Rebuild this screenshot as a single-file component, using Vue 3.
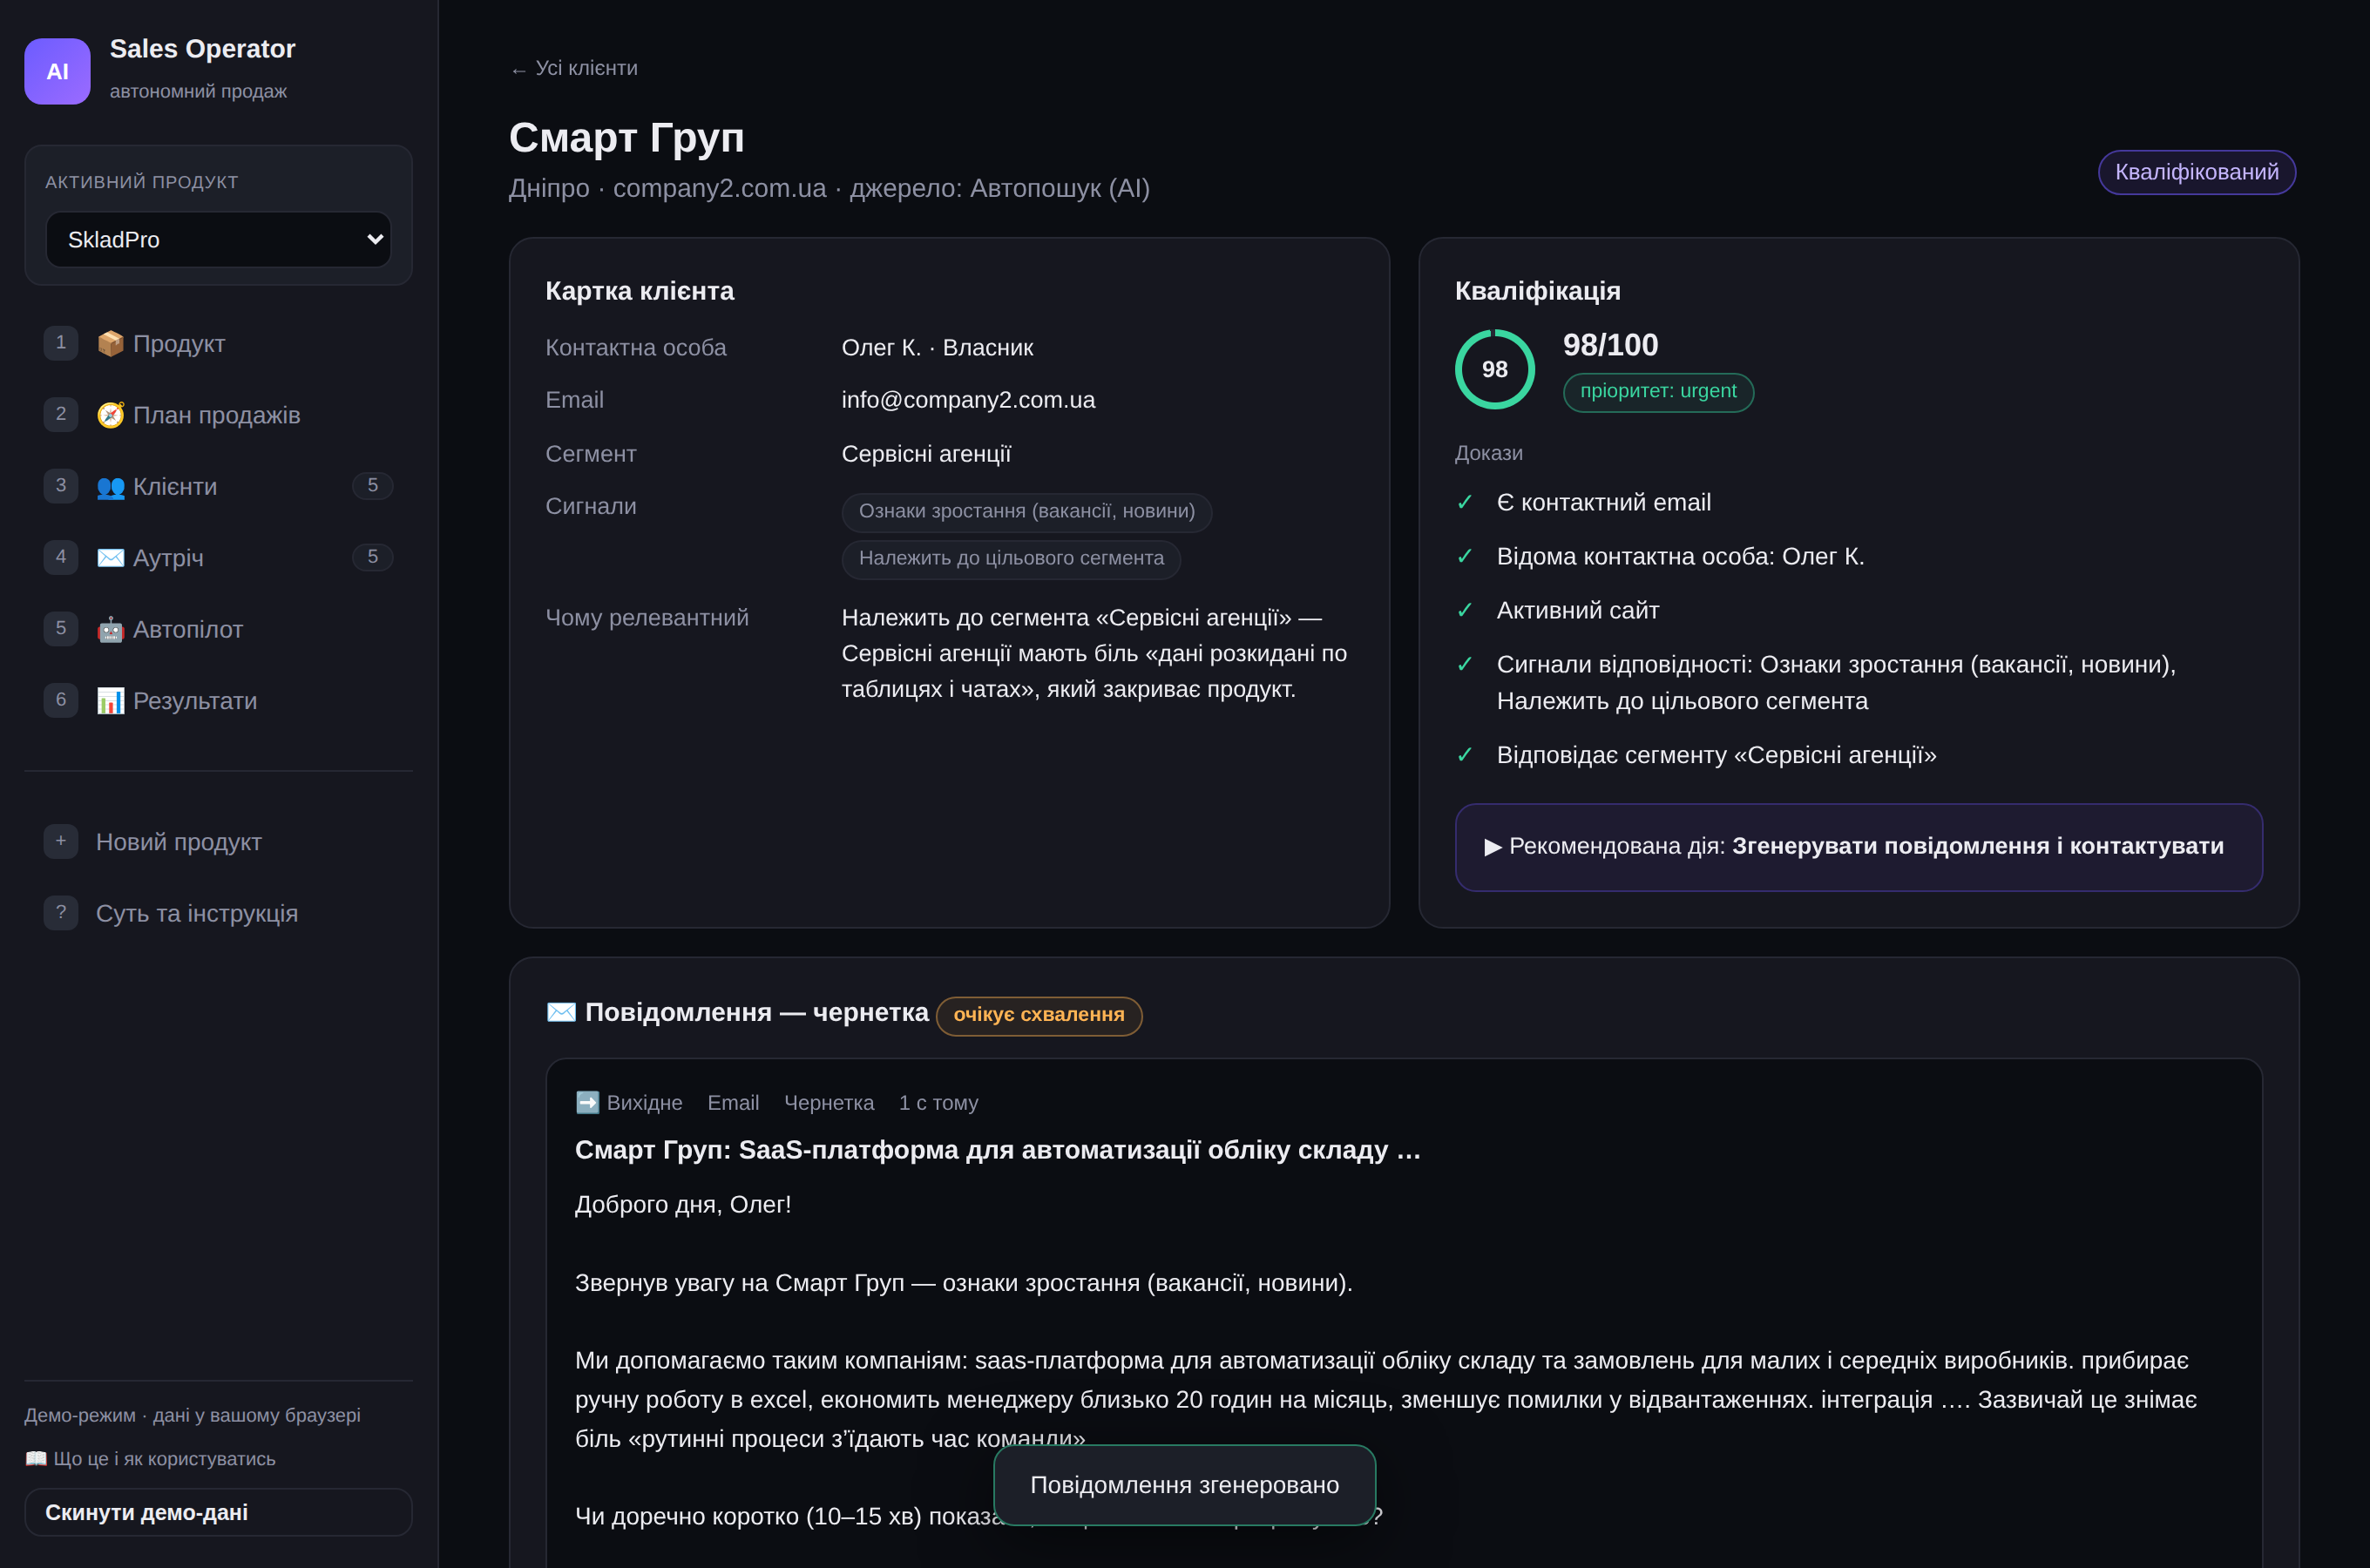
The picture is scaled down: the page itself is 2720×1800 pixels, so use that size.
<script setup>
const nav = [
  { n: '1', label: '📦 Продукт' },
  { n: '2', label: '🧭 План продажів' },
  { n: '3', label: '👥 Клієнти', count: 5 },
  { n: '4', label: '✉️ Аутріч', count: 5 },
  { n: '5', label: '🤖 Автопілот' },
  { n: '6', label: '📊 Результати' },
]
const extra = [
  { n: '+', label: 'Новий продукт' },
  { n: '?', label: 'Суть та інструкція' },
]
const signals = ['Ознаки зростання (вакансії, новини)', 'Належить до цільового сегмента']
const evidence = [
  'Є контактний email',
  'Відома контактна особа: Олег К.',
  'Активний сайт',
  'Сигнали відповідності: Ознаки зростання (вакансії, новини), Належить до цільового сегмента',
  'Відповідає сегменту «Сервісні агенції»',
]
const score = 98
const body = `Доброго дня, Олег!

Звернув увагу на Смарт Груп — ознаки зростання (вакансії, новини).

Ми допомагаємо таким компаніям: saas-платформа для автоматизації обліку складу та замовлень для малих і середніх виробників. прибирає ручну роботу в excel, економить менеджеру близько 20 годин на місяць, зменшує помилки у відвантаженнях. інтеграція …. Зазвичай це знімає біль «рутинні процеси з’їдають час команди».

Чи доречно коротко (10–15 хв) показати, як це системно працює у вас?`
</script>

<template>
  <div class="app">
    <aside class="sidebar">
      <div class="brand">
        <div class="logo">AI</div>
        <div class="brand-text">
          <div class="brand-name">Sales Operator</div>
          <div class="brand-sub">автономний продаж</div>
        </div>
      </div>

      <div class="product">
        <div class="product-label">АКТИВНИЙ ПРОДУКТ</div>
        <div class="select">
          <span>SkladPro</span>
          <svg width="20" height="14" viewBox="0 0 20 14"><path d="M2 2.2 L10 10 L18 2.2" fill="none" stroke="#ececf1" stroke-width="4.4" /></svg>
        </div>
      </div>

      <nav class="nav">
        <a v-for="i in nav" :key="i.n" class="nav-item">
          <span class="tile">{{ i.n }}</span>
          <span class="nav-label">{{ i.label }}</span>
          <span v-if="i.count" class="count">{{ i.count }}</span>
        </a>
        <div class="divider"></div>
        <a v-for="i in extra" :key="i.n" class="nav-item">
          <span class="tile">{{ i.n }}</span>
          <span class="nav-label">{{ i.label }}</span>
        </a>
      </nav>

      <div class="foot">
        <div class="foot-line">Демо-режим · дані у вашому браузері</div>
        <div class="foot-line foot-link">📖 Що це і як користуватись</div>
        <button class="reset">Скинути демо-дані</button>
      </div>
    </aside>

    <main class="main">
      <a class="back">← Усі клієнти</a>
      <header class="head">
        <div>
          <h1>Смарт Груп</h1>
          <p class="lead">Дніпро · company2.com.ua · джерело: Автопошук (AI)</p>
        </div>
        <span class="status">Кваліфікований</span>
      </header>

      <div class="cols">
        <section class="card">
          <h3>Картка клієнта</h3>
          <div class="kv">
            <span class="k">Контактна особа</span><span>Олег К. · Власник</span>
            <span class="k">Email</span><span>info@company2.com.ua</span>
            <span class="k">Сегмент</span><span>Сервісні агенції</span>
            <span class="k">Сигнали</span>
            <div class="chips">
              <span v-for="s in signals" :key="s" class="chip">{{ s }}</span>
            </div>
            <span class="k">Чому релевантний</span>
            <span>Належить до сегмента «Сервісні агенції» — Сервісні агенції мають біль «дані розкидані по таблицях і чатах», який закриває продукт.</span>
          </div>
        </section>

        <section class="card">
          <h3>Кваліфікація</h3>
          <div class="score">
            <div class="ring" :style="{ '--p': score + '%' }"><b>{{ score }}</b></div>
            <div class="score-text">
              <div class="score-num">{{ score }}/100</div>
              <span class="chip green">пріоритет: urgent</span>
            </div>
          </div>
          <div class="proof">Докази</div>
          <ul class="checks">
            <li v-for="e in evidence" :key="e"><span class="tick">✓</span><span>{{ e }}</span></li>
          </ul>
          <div class="reco">▶ Рекомендована дія: <b>Згенерувати повідомлення і контактувати</b></div>
        </section>
      </div>

      <section class="card wide">
        <div class="msg-head">
          <h3>✉️ Повідомлення — чернетка</h3>
          <span class="chip amber">очікує схвалення</span>
        </div>
        <article class="msg">
          <div class="meta"><span>➡️ Вихідне</span><span>Email</span><span>Чернетка</span><span>1 с тому</span></div>
          <div class="subject">Смарт Груп: SaaS-платформа для автоматизації обліку складу …</div>
          <div class="body">{{ body }}</div>
        </article>
      </section>
    </main>

    <div class="toast">Повідомлення згенеровано</div>
  </div>
</template>

<style>
body { background: #0b0d12; }
</style>

<style scoped>
* { box-sizing: border-box; }
.app {
  position: relative;
  display: flex;
  width: 2720px;
  height: 1800px;
  overflow: hidden;
  background: #0b0d12;
  color: #ececf1;
  font: 28px/42px "Liberation Sans", Arial, sans-serif;
  text-rendering: geometricPrecision;
}
.sidebar {
  display: flex;
  flex-direction: column;
  flex: none;
  width: 504px;
  padding: 44px 28px 36px;
  background: #16171f;
  border-right: 2px solid #262833;
}
.brand { display: flex; gap: 22px; height: 76px; }
.logo {
  display: flex;
  align-items: center;
  justify-content: center;
  width: 76px;
  height: 76px;
  border-radius: 20px;
  background: linear-gradient(135deg, #6c5cff, #9b6bff);
  color: #fff;
  font-size: 26px;
  font-weight: 700;
}
.brand-name { margin-top: -10px; font-size: 30px; line-height: 45px; font-weight: 700; }
.brand-sub { margin-top: 9px; font-size: 22px; line-height: 33px; color: #8d90a3; }

.product {
  margin-top: 46px;
  padding: 27px 22px 18px;
  border: 2px solid #262833;
  border-radius: 20px;
  background: #1c1f28;
}
.product-label { font-size: 20px; line-height: 30px; letter-spacing: 1px; color: #8d90a3; }
.select {
  display: flex;
  align-items: center;
  justify-content: space-between;
  height: 66px;
  margin-top: 17px;
  padding: 0 7px 0 24px;
  border: 2px solid #262833;
  border-radius: 18px;
  background: #0b0d12;
  font-size: 26px;
}

.nav { margin-top: 25px; }
.nav-item { display: flex; align-items: center; height: 82px; padding: 0 22px; color: #8d90a3; }
.tile {
  display: flex;
  align-items: center;
  justify-content: center;
  width: 40px;
  height: 40px;
  padding-bottom: 2px;
  margin-right: 20px;
  border-radius: 12px;
  background: #282c37;
  font-size: 22px;
}
.nav-label { flex: 1; padding-top: 2px; white-space: nowrap; }
.count {
  display: flex;
  align-items: center;
  justify-content: center;
  width: 48px;
  height: 32px;
  padding-bottom: 2px;
  border: 2px solid #262833;
  border-radius: 16px;
  background: #1c1f28;
  font-size: 22px;
}
.divider { height: 2px; margin: 39px 0; background: #262833; }

.foot { margin-top: auto; padding-top: 22px; border-top: 2px solid #262833; color: #8d90a3; }
.foot-line { font-size: 22px; line-height: 33px; white-space: nowrap; }
.foot-link { margin: 17px 0 17px; }
.reset {
  display: block;
  width: 100%;
  height: 56px;
  padding: 0 22px;
  border: 2px solid #262833;
  border-radius: 20px;
  background: transparent;
  color: #ececf1;
  font: 700 25px "Liberation Sans", Arial, sans-serif;
  text-align: left;
}

.main { flex: none; width: 2216px; padding: 61px 80px 0; will-change: transform; }
.back { display: block; font-size: 24px; line-height: 36px; color: #8d90a3; }
.head { display: flex; justify-content: space-between; margin-top: 33px; height: 142px; }
h1 { margin: 0; font-size: 48px; line-height: 58px; }
.lead { margin: 6px 0 0; font-size: 30px; line-height: 45px; color: #8d90a3; }
.status {
  height: 52px;
  margin: 42px 4px 0 0;
  padding: 0 17.6px;
  border: 2px solid #45399b;
  border-radius: 26px;
  background: #19162d;
  color: #c4b5fd;
  font-size: 26px;
  line-height: 46px;
}

.cols { display: grid; grid-template-columns: 1fr 1fr; gap: 32px; height: 794px; }
.card { padding: 41px 40px 40px; border: 2px solid #262833; border-radius: 28px; background: #16171f; }
h3 { margin: 0; font-size: 30px; line-height: 39px; white-space: nowrap; }
.kv {
  display: grid;
  grid-template-columns: 300px 1fr;
  grid-template-rows: 60px 62px 60px 128px auto;
  column-gap: 40px;
  margin-top: 25px;
  font-size: 27px;
  line-height: 41px;
}
.k { color: #8d90a3; }
.chips { display: flex; flex-wrap: wrap; align-content: flex-start; gap: 8px; padding-top: 5px; }
.chip {
  height: 46px;
  padding: 0 18px;
  border: 2px solid #262833;
  border-radius: 23px;
  background: #1c1f28;
  color: #8d90a3;
  font-size: 23px;
  line-height: 37px;
  white-space: nowrap;
}
.green { border-color: #246b58; background: #192529; color: #3ad6a0; }
.amber { border-color: #7f5d35; background: #272221; color: #ffb454; font-weight: 700; }

.score { display: flex; align-items: center; gap: 32px; height: 100px; margin-top: 20px; }
.ring {
  display: flex;
  align-items: center;
  justify-content: center;
  width: 92px;
  height: 92px;
  border-radius: 50%;
  background:
    radial-gradient(circle closest-side, #16171f 37.5px, transparent 38.5px),
    conic-gradient(#3ad6a0 var(--p), #262833 0);
  font-size: 27px;
}
.score-text { display: flex; flex-direction: column; align-items: flex-start; }
.score-num { margin-bottom: 11px; font-size: 36px; line-height: 43px; font-weight: 700; }
.proof { margin-top: 28px; font-size: 24px; line-height: 37px; color: #8d90a3; }
.checks { display: flex; flex-direction: column; gap: 20px; margin: 17px 0 0; padding: 0; list-style: none; }
.checks li { display: flex; }
.tick { flex: none; width: 48px; color: #3ad6a0; }
.reco {
  height: 102px;
  margin-top: 34px;
  padding: 26px 32px;
  border: 2px solid #352c6e;
  border-radius: 24px;
  background: #1e1b30;
  font-size: 27px;
  white-space: nowrap;
}

.wide { height: 800px; margin-top: 32px; }
.msg-head { display: flex; align-items: flex-start; gap: 7.5px; height: 73px; }
.msg-head h3 { margin-top: 2px; }
.msg-head .chip { margin-top: 3px; padding: 0 18.5px; }
.msg { height: 700px; padding: 33px 32px; border: 2px solid #262833; border-radius: 24px; background: #0b0d12; }
.meta { display: flex; gap: 28px; font-size: 24px; line-height: 36px; color: #8d90a3; }
.subject { margin-top: 13px; font-size: 30px; line-height: 45px; font-weight: 700; }
.body { margin-top: 18px; line-height: 44.8px; white-space: pre-wrap; }

.toast {
  position: absolute;
  left: 50%;
  bottom: 48px;
  width: 440px;
  height: 94px;
  padding: 24px 40px;
  border: 2px solid #287a62;
  border-radius: 24px;
  background: #1c1f28;
  box-shadow: 0 20px 80px rgba(0, 0, 0, 0.5);
  text-align: center;
  white-space: nowrap;
  transform: translateX(-50%);
  will-change: transform;
}
</style>
